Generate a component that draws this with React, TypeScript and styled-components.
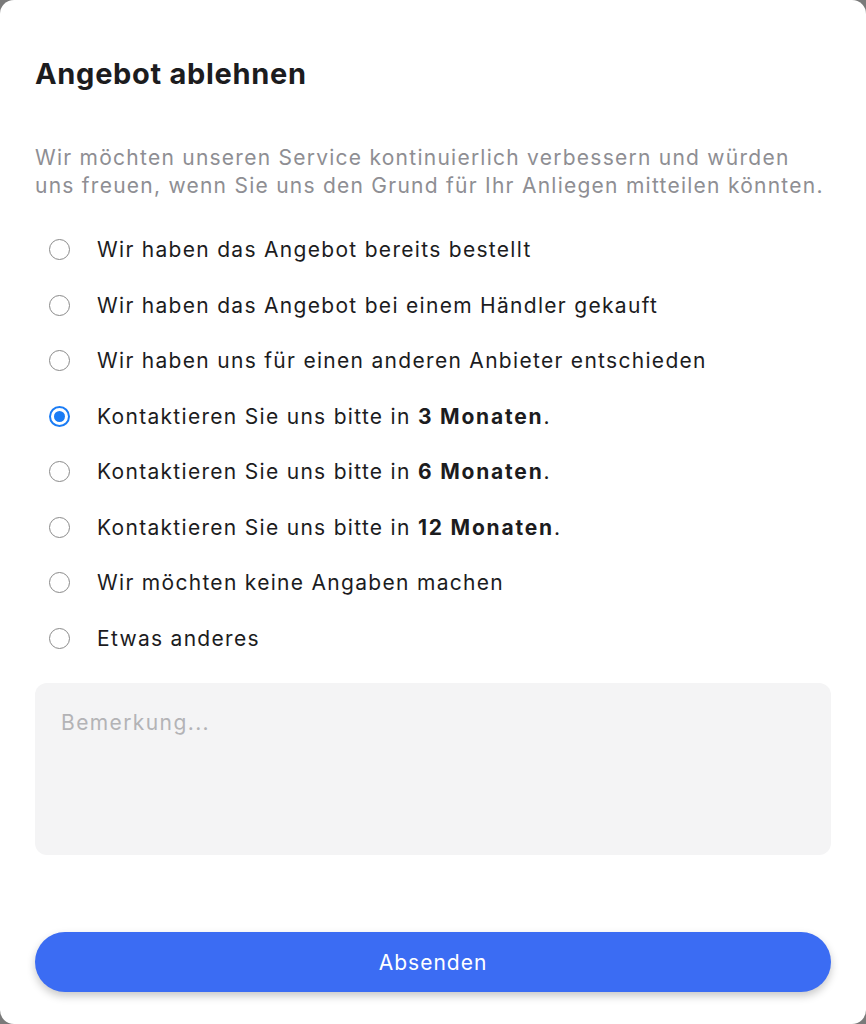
import React, { useState } from "react";
import styled, { createGlobalStyle } from "styled-components";

const Global = createGlobalStyle`
  html, body { margin: 0; padding: 0; background: #7a7a7a; }
  body { font-family: Inter, "Noto Sans", sans-serif; -webkit-font-smoothing: antialiased; }
  * { box-sizing: border-box; }
`;

const Card = styled.div`
  width: 866px;
  height: 1024px;
  background: #ffffff;
  border-radius: 14px;
  padding: 0 35px 32px;
  display: flex;
  flex-direction: column;
`;

const Title = styled.h1`
  margin: 57px 0 0;
  font-size: 29px;
  line-height: 34px;
  font-weight: 700;
  color: #1c1c1e;
  letter-spacing: 0.7px;
`;

const Description = styled.p`
  margin: 53px 0 0;
  max-width: 792px;
  font-size: 21px;
  line-height: 28px;
  letter-spacing: 1.25px;
  color: #8e8e93;
`;

const Options = styled.div`
  display: flex;
  flex-direction: column;
  margin-top: 22px;
`;

const Option = styled.label`
  display: flex;
  align-items: center;
  height: 55.5px;
  cursor: pointer;
  font-size: 21px;
  letter-spacing: 1.3px;
  color: #1c1c1e;
  b { font-weight: 700; letter-spacing: 1.8px; }
`;

const Radio = styled.span<{ $checked: boolean }>`
  width: 21px;
  height: 21px;
  margin: 0 27px 0 14px;
  border-radius: 50%;
  flex: none;
  border: ${(p) => (p.$checked ? "2px solid #1a7cf5" : "1.5px solid #8a8a8a")};
  background: #fff;
  display: flex;
  align-items: center;
  justify-content: center;
  &::after {
    content: "";
    width: 11px;
    height: 11px;
    border-radius: 50%;
    background: ${(p) => (p.$checked ? "#1a7cf5" : "transparent")};
  }
`;

const Remark = styled.textarea`
  margin-top: 17px;
  width: 100%;
  height: 172px;
  border: none;
  outline: none;
  resize: none;
  background: #f4f4f5;
  border-radius: 12px;
  padding: 27px 26px 24px;
  font-family: inherit;
  font-size: 21px;
  line-height: 26px;
  letter-spacing: 1.4px;
  color: #1c1c1e;
  &::placeholder { color: #b3b3b6; }
`;

const Submit = styled.button`
  margin-top: auto;
  width: 100%;
  height: 60px;
  border: none;
  border-radius: 30px;
  background: #3b6cf3;
  color: #ffffff;
  font-family: inherit;
  font-size: 21px;
  letter-spacing: 1px;
  box-shadow: 0 4px 8px rgba(0, 0, 0, 0.22);
  cursor: pointer;
`;

const options: React.ReactNode[] = [
  "Wir haben das Angebot bereits bestellt",
  "Wir haben das Angebot bei einem Händler gekauft",
  "Wir haben uns für einen anderen Anbieter entschieden",
  <>Kontaktieren Sie uns bitte in <b>3 Monaten</b>.</>,
  <>Kontaktieren Sie uns bitte in <b>6 Monaten</b>.</>,
  <>Kontaktieren Sie uns bitte in <b>12 Monaten</b>.</>,
  "Wir möchten keine Angaben machen",
  "Etwas anderes",
];

export default function App() {
  const [sel, setSel] = useState(3);
  return (
    <>
      <Global />
      <Card>
        <Title>Angebot ablehnen</Title>
        <Description>
          Wir möchten unseren Service kontinuierlich verbessern und würden uns freuen, wenn Sie uns den Grund für Ihr Anliegen mitteilen könnten.
        </Description>
        <Options>
          {options.map((o, i) => (
            <Option key={i} onClick={() => setSel(i)}>
              <Radio $checked={sel === i} />
              <span>{o}</span>
            </Option>
          ))}
        </Options>
        <Remark placeholder="Bemerkung..." />
        <Submit>Absenden</Submit>
      </Card>
    </>
  );
}
